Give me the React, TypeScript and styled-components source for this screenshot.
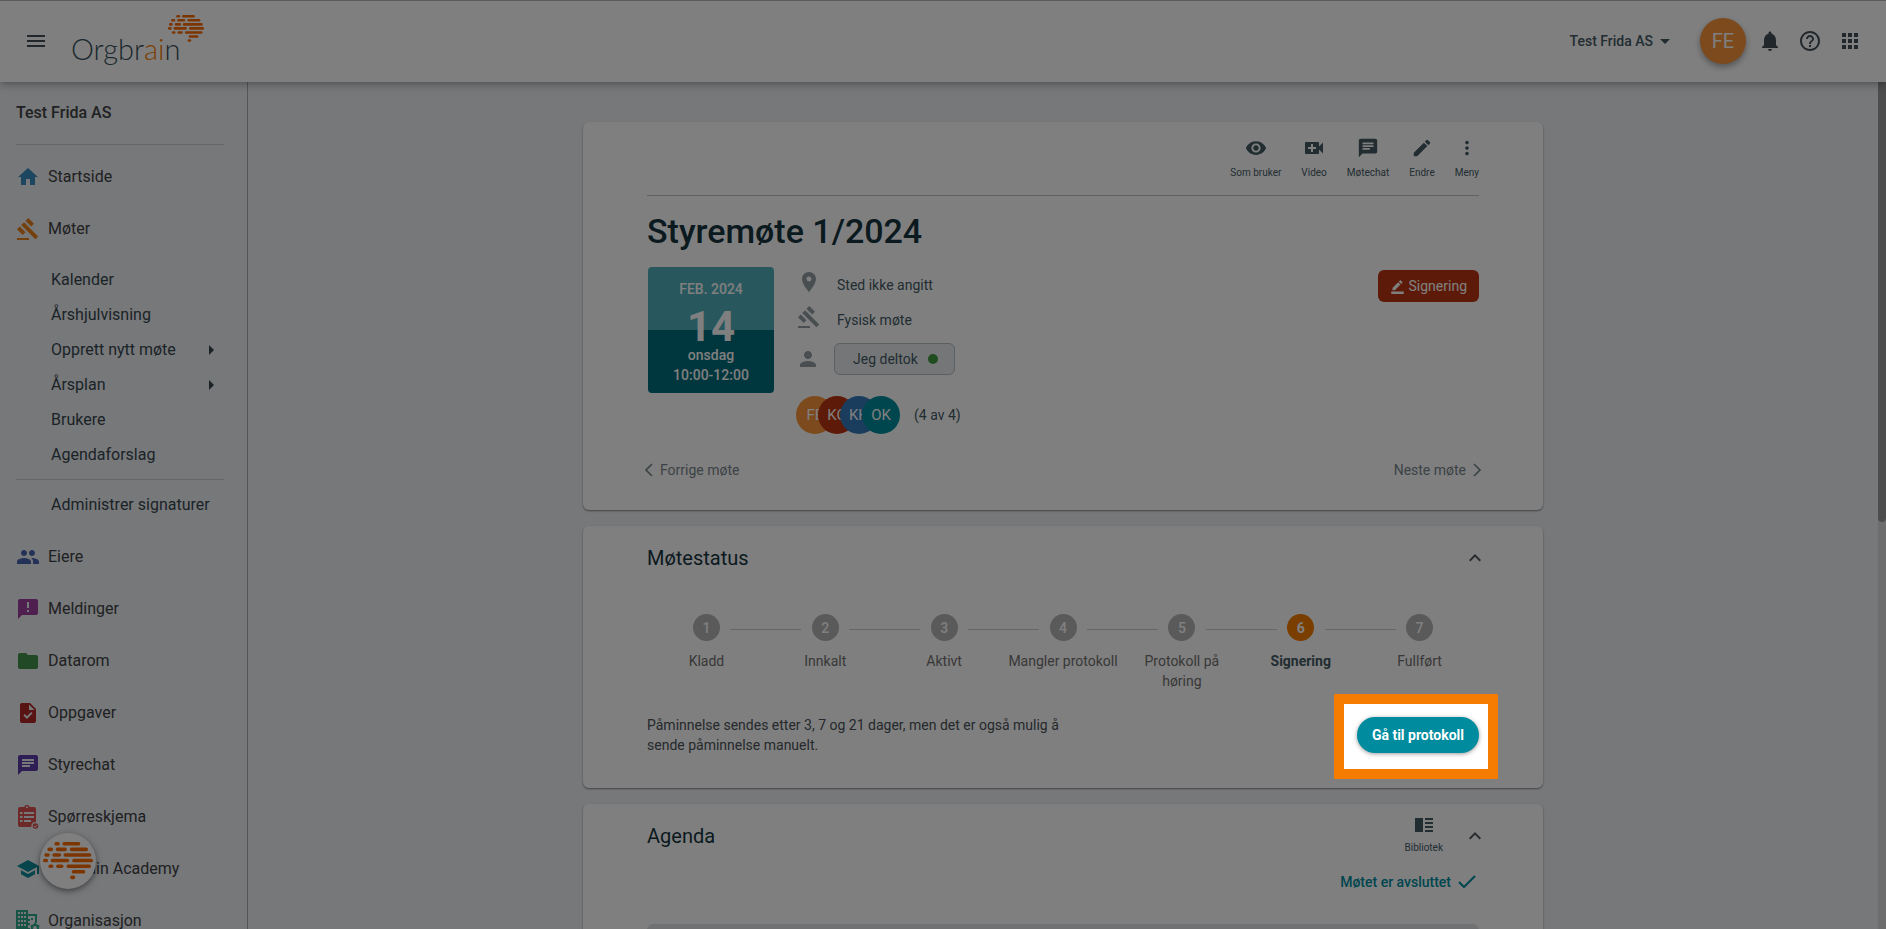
import React from 'react';
import styled, { createGlobalStyle } from 'styled-components';
import {
  MdAnnouncement,
  MdApps,
  MdArrowDropDown,
  MdArrowRight,
  MdBorderColor,
  MdChat,
  MdEdit,
  MdFolder,
  MdGavel,
  MdGroup,
  MdHelpOutline,
  MdHome,
  MdKeyboardArrowUp,
  MdMenu,
  MdMoreVert,
  MdNotifications,
  MdPerson,
  MdPlace,
  MdSchool,
  MdTask,
  MdVideoCall,
  MdVisibility,
} from 'react-icons/md';

const color = {
  page: '#eef0f4',
  ink: '#16343f',
  text: '#455a64',
  body: '#4a5258',
  nav: '#3f4244',
  subnav: '#37474f',
  rule: '#c9ccd0',
  muted: '#78868d',
  teal: '#008c9e',
  orange: '#f57c00',
  brand: '#fb6a00',
};

const GlobalStyle = createGlobalStyle`
  *, *::before, *::after { box-sizing: border-box; }
  body {
    margin: 0;
    background: ${color.page};
    color: ${color.text};
    font-family: Roboto, "Liberation Sans", sans-serif;
    font-size: 14px;
    line-height: 20px;
  }
  button { font: inherit; color: inherit; border: 0; padding: 0; background: none; cursor: pointer; }
  a { color: inherit; text-decoration: none; }
  svg { display: block; flex: none; }
  ul, ol { list-style: none; margin: 0; padding: 0; }
  h1, h2, p { margin: 0; }
`;

const Page = styled.div`
  display: flex;
  flex-direction: column;
  height: 100vh;
  overflow: hidden;
`;

/* ---------- header ---------- */

const Header = styled.header`
  position: relative;
  z-index: 10;
  flex: none;
  display: flex;
  align-items: center;
  height: 82px;
  padding: 0 24px;
  background: #fff;
  box-shadow: inset 0 1px #b4b4b4, 0 2px 8px rgba(0, 0, 0, 0.35);
  color: #454f58;
`;

const Logo = styled.a`
  position: relative;
  display: block;
  margin-left: 23px;
  padding: 16px 23px 0 0;
  font-family: Lato, "Open Sans", sans-serif;
  font-weight: 300;
  font-size: 29px;
  line-height: 52px;
  color: #37505c;

  span { color: ${color.orange}; }

  svg {
    position: absolute;
    top: 8px;
    right: 0;
  }
`;

const HeaderEnd = styled.div`
  display: flex;
  align-items: center;
  gap: 16px;
  margin-left: auto;
`;

const OrgSwitch = styled.button`
  display: flex;
  align-items: center;
  margin-right: 7px;
  font-weight: 500;
  color: ${color.text};
`;

const UserButton = styled.button`
  width: 46px;
  height: 46px;
  margin-right: -4px;
  border-radius: 50%;
  background: #f9943b;
  color: #fff;
  font-size: 20px;
  box-shadow: 0 3px 6px rgba(0, 0, 0, 0.35);
`;

/* ---------- sidebar ---------- */

const Body = styled.div`
  flex: 1;
  display: flex;
  min-height: 0;
`;

const Sidebar = styled.nav`
  flex: none;
  width: 248px;
  padding: 0 23px 0 16px;
  border-right: 1px solid #a9abae;
  font-size: 16px;
  color: ${color.nav};
`;

const OrgName = styled.div`
  display: flex;
  align-items: center;
  height: 63px;
  margin-bottom: 6px;
  border-bottom: 1px solid ${color.rule};
  font-weight: 500;
`;

const NavLink = styled.a`
  display: flex;
  align-items: center;
  gap: 8px;
  height: 52px;
`;

const SubMenu = styled.ul`
  padding: 7px 0 9px;
  color: ${color.subnav};
`;

const SubItem = styled.li<{ $divided?: boolean }>`
  ${(p) => p.$divided && `
    margin-top: 7px;
    padding-top: 7px;
    border-top: 1px solid ${color.rule};
  `}
`;

const SubLink = styled.a`
  display: flex;
  align-items: center;
  justify-content: space-between;
  height: 35px;
  padding: 0 1px 0 35px;
`;

const AssistantButton = styled.button`
  position: fixed;
  z-index: 20;
  left: 40px;
  bottom: 40px;
  display: flex;
  align-items: center;
  justify-content: center;
  width: 56px;
  height: 56px;
  border-radius: 50%;
  background: #fff;
  box-shadow: 0 2px 6px rgba(0, 0, 0, 0.5);
`;

/* ---------- content ---------- */

const Main = styled.main`
  flex: 1;
  min-width: 0;
  padding: 40px 24px 0;
`;

const Stack = styled.div`
  display: flex;
  flex-direction: column;
  gap: 16px;
  max-width: 960px;
  margin: 0 auto;
`;

const Card = styled.section`
  padding: 0 64px;
  background: #fff;
  border-radius: 6px;
  box-shadow: 0 1px 2px rgba(0, 0, 0, 0.45);
`;

const ScrollTrack = styled.div`
  flex: none;
  width: 8px;
  background: #dadbdd;
`;

const ScrollThumb = styled.div`
  height: 52%;
  border-radius: 0 0 4px 4px;
  background: #9a9a9a;
`;

const ActionBar = styled.div`
  display: flex;
  justify-content: flex-end;
  gap: 20px;
  height: 74px;
  padding-top: 14px;
  border-bottom: 1px solid #bfc2c4;
`;

const Action = styled.button<{ $compact?: boolean }>`
  display: flex;
  flex-direction: column;
  align-items: center;
  gap: ${(p) => (p.$compact ? 3 : 5)}px;
  height: 46px;
  font-size: 10px;
  line-height: 16px;
  color: ${color.text};
`;

const ActionIcon = styled.span`
  display: flex;
  align-items: center;
  height: 24px;
`;

const Title = styled.h1`
  padding: 15px 0 16px;
  font-size: 34px;
  font-weight: 500;
  line-height: 40px;
  color: ${color.ink};
`;

const Summary = styled.div`
  display: flex;
  align-items: flex-start;
  padding-left: 1px;
`;

const DateTile = styled.time`
  display: flex;
  flex-direction: column;
  align-items: center;
  width: 126px;
  height: 126px;
  padding-top: 12px;
  border-radius: 4px;
  background: linear-gradient(#50b0bb 50%, #006d7a 50%);
  color: #fff;
  font-weight: 500;
`;

const Day = styled.strong`
  padding-top: 10px;
  font-size: 42px;
  font-weight: 700;
  line-height: 36px;
`;

const Facts = styled.div`
  flex: 1;
  padding-left: 22px;
`;

const Fact = styled.div`
  display: flex;
  align-items: center;
  gap: 16px;
  height: 35px;
  padding-left: 1px;

  svg {
    margin-bottom: 6px;
    color: #929da2;
  }
`;

const AttendanceRow = styled.div`
  display: flex;
  align-items: center;
  gap: 14px;
  height: 43px;

  svg { color: #929da2; }
`;

const Attendance = styled.button`
  display: flex;
  align-items: center;
  gap: 10px;
  height: 32px;
  padding: 0 16px 0 18px;
  border: 1px solid #b4bfc4;
  border-radius: 6px;
  background: #e9edf0;

  &::after {
    content: "";
    width: 10px;
    height: 10px;
    border-radius: 50%;
    background: #3f9a3f;
  }
`;

const People = styled.div`
  display: flex;
  align-items: center;
  padding-top: 16px;
  gap: 14px;
`;

const AvatarStack = styled.div`
  display: flex;
`;

const Avatar = styled.span<{ $bg: string }>`
  display: flex;
  align-items: center;
  justify-content: center;
  width: 38px;
  height: 38px;
  border-radius: 50%;
  background: ${(p) => p.$bg};
  color: #fff;
  font-size: 15px;

  &:not(:first-child) { margin-left: -16px; }
`;

const SignBadge = styled.button`
  display: flex;
  align-items: center;
  gap: 4px;
  height: 32px;
  margin-top: 3px;
  padding: 0 12px;
  border-radius: 6px;
  background: #bd3410;
  color: #fff;
`;

const Pager = styled.div`
  display: flex;
  justify-content: space-between;
  padding: 26px 0 30px;
  margin: 0 -3px;
  color: ${color.muted};
`;

const PagerLink = styled.a`
  display: flex;
  align-items: center;
  gap: 7px;
`;

const CardHead = styled.div`
  display: flex;
  align-items: center;
  gap: 20px;
  height: 64px;
`;

const CardTitle = styled.h2`
  flex: 1;
  font-size: 20px;
  font-weight: 400;
  line-height: 24px;
  color: ${color.ink};
`;

const Toggle = styled.button`
  margin: 0 -8px 0 0;
  color: #50585c;
`;

const Steps = styled.ol`
  display: flex;
  padding-top: 24px;
  min-height: 110px;
`;

const Step = styled.li<{ $active?: boolean }>`
  position: relative;
  flex: 1 1 0;
  display: flex;
  flex-direction: column;
  align-items: center;
  gap: 10px;
  text-align: center;
  color: ${(p) => (p.$active ? color.text : '#717171')};
  font-weight: ${(p) => (p.$active ? 700 : 400)};

  &:not(:first-child)::before {
    content: "";
    position: absolute;
    top: 15px;
    left: calc(24px - 50%);
    right: calc(50% + 24px);
    border-top: 1px solid #cfcfcf;
  }
`;

const StepDot = styled.span<{ $active?: boolean }>`
  display: flex;
  align-items: center;
  justify-content: center;
  width: 27px;
  height: 27px;
  border-radius: 50%;
  background: ${(p) => (p.$active ? color.orange : '#b4b4b4')};
  color: #fff;
  font-weight: ${(p) => (p.$active ? 700 : 500)};
`;

const StepLabel = styled.span`
  padding: 0 4px;
`;

const StatusFoot = styled.div`
  display: flex;
  align-items: center;
  justify-content: space-between;
  padding: 15px 0 33px;
  color: ${color.body};

  p { max-width: 424px; }
`;

/* The tour highlight frames the control and dims the rest of the page. */
const Highlight = styled.div`
  position: relative;

  &::after {
    content: "";
    position: absolute;
    z-index: 50;
    inset: -23px -19px -26px -23px;
    border: 10px solid ${color.orange};
    box-shadow: 0 0 0 4000px rgba(0, 0, 0, 0.5);
    pointer-events: none;
  }
`;

const PrimaryButton = styled.button`
  height: 36px;
  padding: 0 15px;
  border-radius: 18px;
  background: ${color.teal};
  color: #fff;
  font-weight: 700;
  box-shadow: 0 1px 4px rgba(0, 0, 0, 0.4);
`;

const Closed = styled.p`
  display: flex;
  align-items: center;
  justify-content: flex-end;
  gap: 7px;
  padding: 4px 3px 32px 0;
  font-weight: 500;
  color: ${color.teal};
`;

const AgendaPanel = styled.div`
  height: 120px;
  border-radius: 6px;
  background: #dfe2e6;
`;

/* ---------- drawings ---------- */

const brainRows: number[][][] = [
  [[34, 50], [58, 111]],
  [[13, 30], [38, 71], [80, 134]],
  [[4, 20], [28, 54], [61, 144]],
  [[0, 15], [23, 78], [87, 149]],
  [[16, 31], [39, 61], [70, 143]],
  [[86, 126]],
  [[81, 96]],
];

function Brain({ width }: { width: number }) {
  return (
    <svg width={width} viewBox="0 0 149 111" fill={color.brand} aria-hidden="true">
      {brainRows.map((row, y) =>
        row.map(([from, to]) => (
          <rect key={`${y}-${from}`} x={from} y={y * 16.7} width={to - from} height={10.6} rx={5} />
        )),
      )}
    </svg>
  );
}

function SurveyIcon() {
  return (
    <svg width="24" height="24" viewBox="0 0 24 24" aria-hidden="true">
      <path
        fill="#d9534f"
        fillRule="evenodd"
        d="M18 2h-4.200A2.800 2.800 0 0 0 11 0a2.800 2.800 0 0 0-2.800 2H4a2 2 0 0 0-2 2v16a2 2 0 0 0 2 2h11.500a4 4 0 0 1 4.500-5V4a2 2 0 0 0-2-2zm-7-.8a1 1 0 1 1 0 2 1 1 0 0 1 0-2zM4 7h2.500v2H4zm4 0h10v2H8zm-4 4h2.500v2H4zm4 0h10v2H8zm-4 4h2.500v2H4zm4 0h7v2H8z"
      />
      <circle cx="19.500" cy="21" r="2.800" fill="#d9534f" />
      <path d="m18 21 1.200 1.200 2-2.200" fill="none" stroke="#eef0f4" />
    </svg>
  );
}

function BuildingIcon() {
  return (
    <svg width="24" height="24" viewBox="0 0 24 24" aria-hidden="true">
      <path
        fill="#2fa98c"
        fillRule="evenodd"
        d="M0 1h12v4h9v9h-2V7h-7v3h2v2h-2v2h2v2h-2v3h2v2H0zM2 3v2h2V3zm3 0v2h2V3zm3 0v2h2V3zM2 7v2h2V7zm3 0v2h2V7zm3 0v2h2V7zm-6 4v2h2v-2zm3 0v2h2v-2zm3 0v2h2v-2zm-6 4v2h2v-2zm3 0v2h2v-2zm3 0v2h2v-2zM15 9h2v2h-2z"
      />
      <circle cx="19" cy="19" r="3" fill="none" stroke="#2fa98c" strokeWidth="2.200" />
      <path
        d="M19 14v2M19 22v2M14.700 16.500l1.700 1M21.600 20.500l1.700 1M14.700 21.500l1.700-1M21.600 17.500l1.700-1"
        stroke="#2fa98c"
        strokeWidth="2"
      />
    </svg>
  );
}

function LibraryIcon() {
  return (
    <svg width="20" height="20" viewBox="0 0 20 20" fill="currentColor" aria-hidden="true">
      <path d="M1 3h8v14H1zM11 3h8v2h-8zM11 7h8v2h-8zM11 11h8v2h-8zM11 15h8v2h-8z" />
    </svg>
  );
}

function Chevron({ dir }: { dir: 'left' | 'right' }) {
  return (
    <svg width="9" height="14" viewBox="0 0 9 14" fill="none" stroke="currentColor" strokeWidth="1.7" aria-hidden="true">
      <path d={dir === 'left' ? 'M8 1 2 7l6 6' : 'm1 1 6 6-6 6'} />
    </svg>
  );
}

function Tick() {
  return (
    <svg width="18" height="14" viewBox="0 0 18 14" fill="none" stroke="currentColor" strokeWidth="2" aria-hidden="true">
      <path d="m1 7 5 5L17 1" />
    </svg>
  );
}

/* ---------- data ---------- */

const mainLinks = [
  { label: 'Eiere', icon: <MdGroup size={24} color="#4a64b0" /> },
  { label: 'Meldinger', icon: <MdAnnouncement size={24} color="#9c3f9f" /> },
  { label: 'Datarom', icon: <MdFolder size={24} color="#43924a" /> },
  { label: 'Oppgaver', icon: <MdTask size={24} color="#b02727" /> },
  { label: 'Styrechat', icon: <MdChat size={24} color="#5e3bad" /> },
  { label: 'Spørreskjema', icon: <SurveyIcon /> },
  { label: 'Orgbrain Academy', icon: <MdSchool size={24} color="#0d8a96" /> },
  { label: 'Organisasjon', icon: <BuildingIcon /> },
];

const subLinks = [
  { label: 'Kalender' },
  { label: 'Årshjulvisning' },
  { label: 'Opprett nytt møte', nested: true },
  { label: 'Årsplan', nested: true },
  { label: 'Brukere' },
  { label: 'Agendaforslag' },
  { label: 'Administrer signaturer', divided: true },
];

const actions = [
  { label: 'Som bruker', icon: <MdVisibility size={22} /> },
  { label: 'Video', icon: <MdVideoCall size={24} /> },
  { label: 'Møtechat', icon: <MdChat size={22} /> },
  { label: 'Endre', icon: <MdEdit size={22} /> },
  { label: 'Meny', icon: <MdMoreVert size={22} /> },
];

const people = [
  { initials: 'FE', bg: '#f9943b' },
  { initials: 'KO', bg: '#bd3410' },
  { initials: 'KH', bg: '#357abd' },
  { initials: 'OK', bg: '#008c9e' },
];

const steps = ['Kladd', 'Innkalt', 'Aktivt', 'Mangler protokoll', 'Protokoll på høring', 'Signering', 'Fullført'];
const currentStep = 5;

export default function App() {
  return (
    <Page>
      <GlobalStyle />
      <Header>
        <button type="button" aria-label="Åpne meny"><MdMenu size={24} /></button>
        <Logo href="#" aria-label="Orgbrain">
          Orgbr<span>ai</span>n
          <Brain width={36} />
        </Logo>
        <HeaderEnd>
          <OrgSwitch type="button">Test Frida AS<MdArrowDropDown size={24} /></OrgSwitch>
          <UserButton type="button">FE</UserButton>
          <button type="button" aria-label="Varsler"><MdNotifications size={24} /></button>
          <button type="button" aria-label="Hjelp"><MdHelpOutline size={24} /></button>
          <button type="button" aria-label="Apper"><MdApps size={24} /></button>
        </HeaderEnd>
      </Header>

      <Body>
        <Sidebar>
          <OrgName>Test Frida AS</OrgName>
          <NavLink href="#"><MdHome size={24} color="#3a8fc0" />Startside</NavLink>
          <NavLink href="#"><MdGavel size={24} color="#e8801a" />Møter</NavLink>
          <SubMenu>
            {subLinks.map((l) => (
              <SubItem key={l.label} $divided={l.divided}>
                <SubLink href="#">
                  {l.label}
                  {l.nested && <MdArrowRight size={24} />}
                </SubLink>
              </SubItem>
            ))}
          </SubMenu>
          {mainLinks.map((l) => (
            <NavLink href="#" key={l.label}>{l.icon}{l.label}</NavLink>
          ))}
        </Sidebar>

        <Main>
          <Stack>
            <Card>
              <ActionBar>
                {actions.map((a) => (
                  <Action type="button" key={a.label}>
                    <ActionIcon>{a.icon}</ActionIcon>
                    {a.label}
                  </Action>
                ))}
              </ActionBar>
              <Title>Styremøte 1/2024</Title>
              <Summary>
                <DateTile dateTime="2024-02-14">
                  <span>FEB. 2024</span>
                  <Day>14</Day>
                  <span>onsdag</span>
                  <span>10:00-12:00</span>
                </DateTile>
                <Facts>
                  <Fact><MdPlace size={24} />Sted ikke angitt</Fact>
                  <Fact><MdGavel size={24} />Fysisk møte</Fact>
                  <AttendanceRow>
                    <MdPerson size={24} />
                    <Attendance type="button">Jeg deltok</Attendance>
                  </AttendanceRow>
                  <People>
                    <AvatarStack>
                      {people.map((p) => <Avatar key={p.initials} $bg={p.bg}>{p.initials}</Avatar>)}
                    </AvatarStack>
                    (4 av 4)
                  </People>
                </Facts>
                <SignBadge type="button"><MdBorderColor size={15} />Signering</SignBadge>
              </Summary>
              <Pager>
                <PagerLink href="#"><Chevron dir="left" />Forrige møte</PagerLink>
                <PagerLink href="#">Neste møte<Chevron dir="right" /></PagerLink>
              </Pager>
            </Card>

            <Card>
              <CardHead>
                <CardTitle>Møtestatus</CardTitle>
                <Toggle type="button" aria-label="Skjul møtestatus"><MdKeyboardArrowUp size={24} /></Toggle>
              </CardHead>
              <Steps>
                {steps.map((label, i) => (
                  <Step key={label} $active={i === currentStep}>
                    <StepDot $active={i === currentStep}>{i + 1}</StepDot>
                    <StepLabel>{label}</StepLabel>
                  </Step>
                ))}
              </Steps>
              <StatusFoot>
                <p>Påminnelse sendes etter 3, 7 og 21 dager, men det er også mulig å sende påminnelse manuelt.</p>
                <Highlight><PrimaryButton type="button">Gå til protokoll</PrimaryButton></Highlight>
              </StatusFoot>
            </Card>

            <Card>
              <CardHead>
                <CardTitle>Agenda</CardTitle>
                <Action type="button" $compact><ActionIcon><LibraryIcon /></ActionIcon>Bibliotek</Action>
                <Toggle type="button" aria-label="Skjul agenda"><MdKeyboardArrowUp size={24} /></Toggle>
              </CardHead>
              <Closed>Møtet er avsluttet<Tick /></Closed>
              <AgendaPanel />
            </Card>
          </Stack>
        </Main>
        <ScrollTrack><ScrollThumb /></ScrollTrack>
      </Body>

      <AssistantButton type="button" aria-label="Åpne assistent"><Brain width={50} /></AssistantButton>
    </Page>
  );
}
